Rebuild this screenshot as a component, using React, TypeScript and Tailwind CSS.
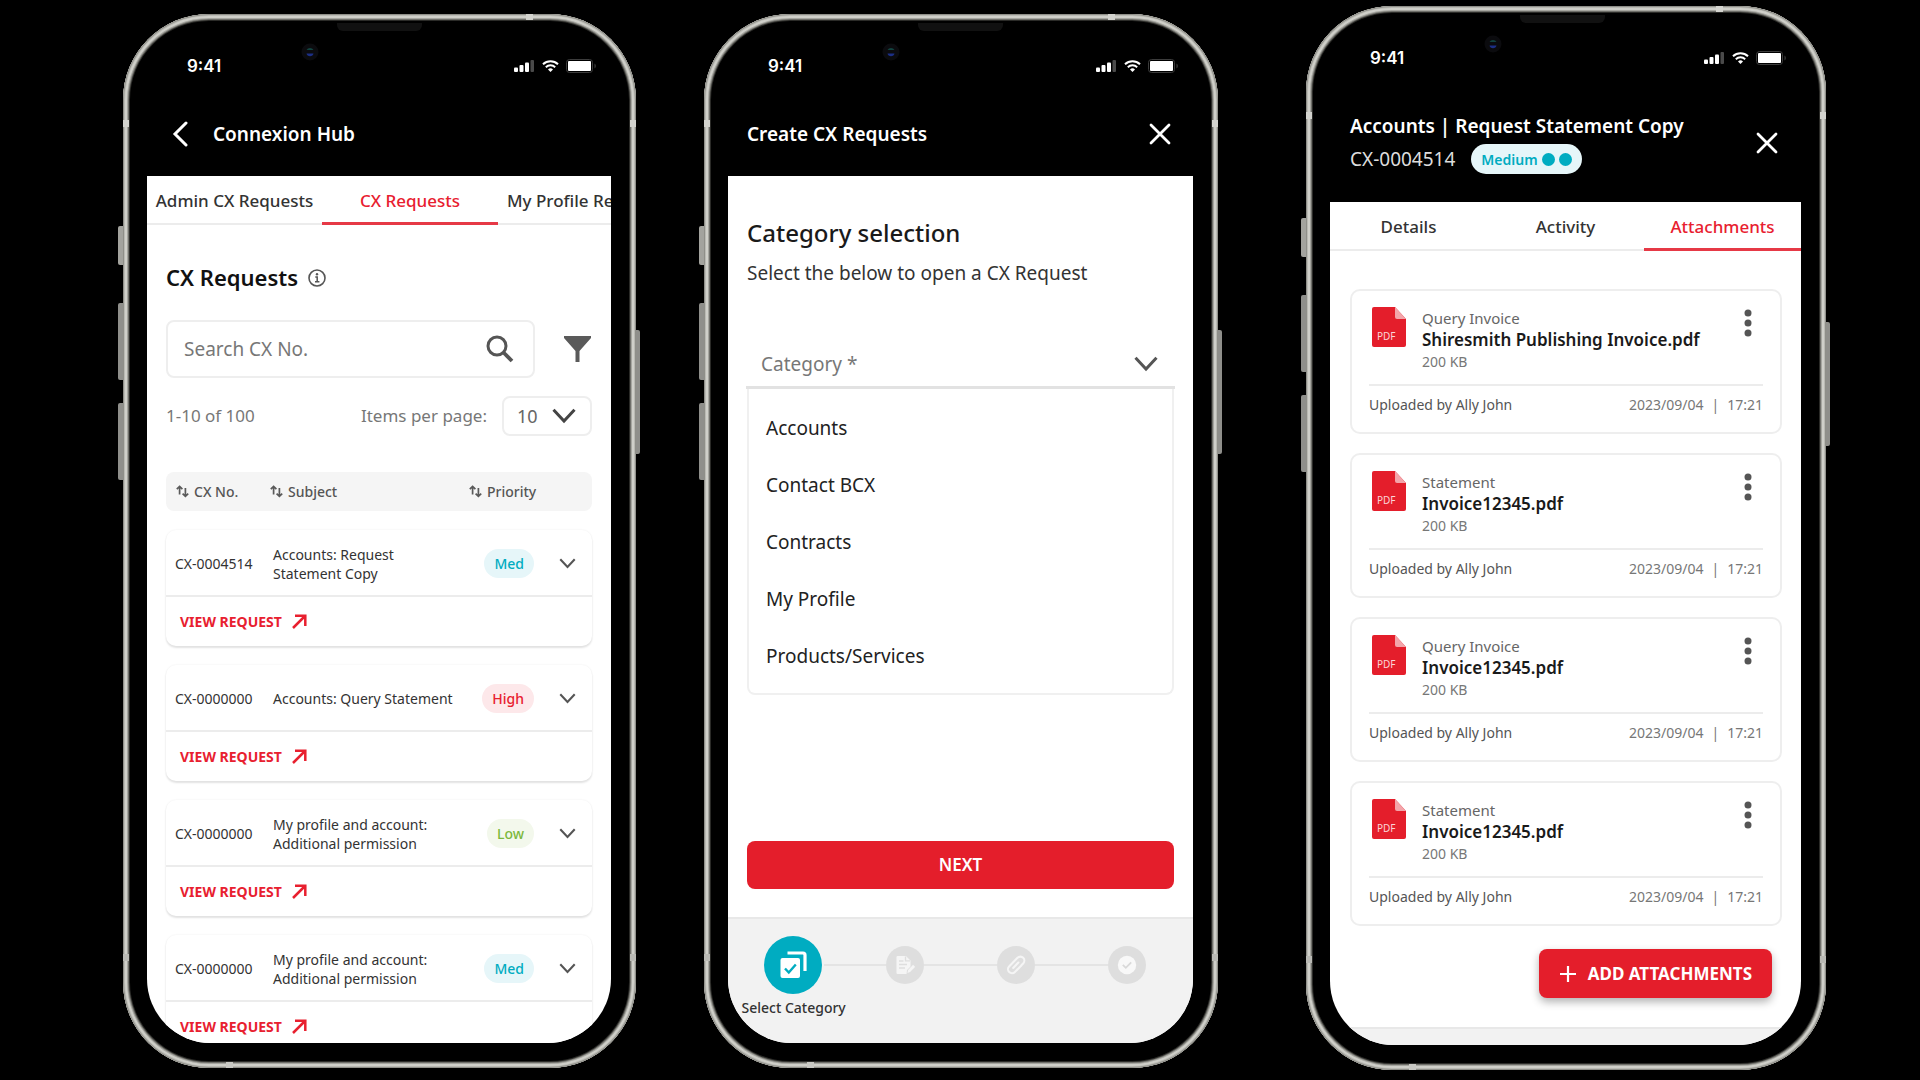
import type { ReactNode } from "react";

const requests = [
  { id: "CX-0004514", subject: "Accounts: Request Statement Copy", priority: "Med" },
  { id: "CX-0000000", subject: "Accounts: Query Statement", priority: "High" },
  { id: "CX-0000000", subject: "My profile and account: Additional permission", priority: "Low" },
  { id: "CX-0000000", subject: "My profile and account: Additional permission", priority: "Med" },
];

const badgeStyles: Record<string, string> = {
  Med: "bg-[#e6f6f9] text-[#00acc1]",
  High: "bg-[#fde8ea] text-[#e8202f]",
  Low: "bg-[#f3f8ec] text-[#7cb83c]",
};

const categories = ["Accounts", "Contact BCX", "Contracts", "My Profile", "Products/Services"];

const attachments = [
  { kind: "Query Invoice", name: "Shiresmith Publishing Invoice.pdf" },
  { kind: "Statement", name: "Invoice12345.pdf" },
  { kind: "Query Invoice", name: "Invoice12345.pdf" },
  { kind: "Statement", name: "Invoice12345.pdf" },
];

function Chevron({ className }: { className: string }) {
  return (
    <svg viewBox="0 0 24 16" className={className} fill="none" stroke="currentColor" strokeWidth="3" aria-hidden="true">
      <path d="M1.5 1.8 12 13 22.5 1.8" />
    </svg>
  );
}

function CloseIcon() {
  return (
    <svg viewBox="0 0 22 22" className="size-[22px]" fill="none" stroke="currentColor" strokeWidth="2.8" strokeLinecap="round" aria-hidden="true">
      <path d="M2 2 20 20M20 2 2 20" />
    </svg>
  );
}

function SortIcon() {
  return (
    <svg viewBox="0 0 13 13" className="size-[13px] shrink-0" fill="none" stroke="#5a5a5a" strokeWidth="1.7" aria-hidden="true">
      <path d="M3.6 9.5V1.5M.8 4.2l2.8-2.8 2.8 2.8M9.4 3v8.2M6.6 8.6l2.8 2.8 2.8-2.8" />
    </svg>
  );
}

function StatusBar() {
  return (
    <div className="flex h-5 items-center pr-3.5 pl-10 text-white">
      <span className="font-[Inter,sans-serif] text-[17px] leading-5 font-semibold">9:41</span>
      <div className="ml-auto flex items-center gap-[7px]">
        <svg viewBox="0 0 21 12" className="h-3 w-[21px]" fill="#fff" aria-hidden="true">
          <rect x="0" y="7.5" width="4" height="4.5" rx="1" />
          <rect x="5.5" y="5" width="4" height="7" rx="1" />
          <rect x="11" y="2.5" width="4" height="9.5" rx="1" />
          <rect x="16.5" y="0" width="3.5" height="12" rx="1" fill="#4a4a4a" />
        </svg>
        <svg viewBox="0 0 17 12" className="h-3 w-[17px]" fill="none" stroke="#fff" aria-hidden="true">
          <path d="M1 4.3a10.8 10.8 0 0 1 15 0" strokeWidth="2" />
          <path d="M3.8 7.2a6.8 6.8 0 0 1 9.4 0" strokeWidth="1.9" />
          <path d="M8.5 12 6 9.4a3.6 3.6 0 0 1 5 0z" fill="#fff" stroke="none" />
        </svg>
        <svg viewBox="0 0 31 14" className="h-3.5 w-[31px]" aria-hidden="true">
          <rect x="0.5" y="0.5" width="26" height="13" rx="3" fill="none" stroke="#3c3c3c" />
          <rect x="2" y="2" width="23" height="10" rx="1" fill="#fff" />
          <path d="M28.5 4.5a3 3 0 0 1 0 5z" fill="#3c3c3c" />
        </svg>
      </div>
    </div>
  );
}

function Phone({ className, header, children }: { className: string; header: ReactNode; children: ReactNode }) {
  return (
    <section className={`relative flex min-h-0 min-w-0 flex-col rounded-[86px] bg-black pt-[42px] pr-[25px] pb-[25px] pl-6 shadow-[inset_0_0_0_1px_#8f8f89,inset_0_0_0_2px_#b9b9b3,inset_0_0_0_4px_#cfcfc9,inset_0_0_0_5px_#a5a59f,inset_0_0_0_6px_#6f6f6a,inset_0_0_0_7px_#2b2b28] ${className}`}>
      {/* hardware buttons */}
      <i className="absolute top-[212px] -left-[5px] h-[39px] w-[5px] rounded-l-xs bg-[#a3a39e]" />
      <i className="absolute top-[289px] -left-[5px] h-[77px] w-[5px] rounded-l-xs bg-[#8f8f8b]" />
      <i className="absolute top-[389px] -left-[5px] h-[77px] w-[5px] rounded-l-xs bg-[#8f8f8b]" />
      <i className="absolute top-[316px] -right-[4px] h-[124px] w-1 rounded-r-xs bg-[#8f8f8b]" />
      {/* antenna bands */}
      <i className="absolute top-[106px] left-0 h-[7px] w-1.5 bg-[#d3d3ce]" />
      <i className="absolute top-[106px] right-0 h-[7px] w-1.5 bg-[#d3d3ce]" />
      <i className="absolute bottom-[107px] left-0 h-[7px] w-1.5 bg-[#b9b9b4]" />
      <i className="absolute right-0 bottom-[107px] h-[7px] w-1.5 bg-[#b9b9b4]" />
      <i className="absolute top-0 right-[103px] h-1.5 w-[7px] bg-[#d3d3ce]" />
      <i className="absolute bottom-0 left-[103px] h-1.5 w-[7px] bg-[#c9c9c4]" />
      {/* speaker and camera */}
      <i className="absolute top-[9px] left-[214px] h-2 w-[85px] rounded-b-md bg-[#111]" />
      <svg viewBox="0 0 18 18" className="absolute top-[29px] left-[178px] size-[18px]" aria-hidden="true">
        <circle cx="9" cy="9" r="8.5" fill="#0b0b0e" />
        <path d="M5.5 7a4 4 0 0 1 7 0z" fill="#12433f" />
        <path d="M5.5 10.5h7a3.6 3.6 0 0 1-7 0z" fill="#1c2f86" />
      </svg>

      <StatusBar />
      {header}
      <div className="relative flex min-h-0 flex-1 flex-col overflow-hidden rounded-b-[64px] bg-white">{children}</div>
    </section>
  );
}

function RequestsScreen() {
  return (
    <Phone
      className="mt-3.5 mb-3"
      header={
        <header className="flex h-[100px] items-center gap-[25px] pt-4 pl-[25px] text-white">
          <button type="button" aria-label="Back">
            <svg viewBox="0 0 16 26" className="h-[26px] w-4" fill="none" stroke="currentColor" strokeWidth="3" strokeLinecap="round" aria-hidden="true">
              <path d="M14 2 3 13l11 11" />
            </svg>
          </button>
          <h1 className="text-[19px] leading-7 font-semibold">Connexion Hub</h1>
        </header>
      }
    >
      <nav className="flex h-[49px] shrink-0 border-b-2 border-[#ececec] text-[17px] leading-6 font-medium whitespace-nowrap">
        <button type="button" className="-mb-0.5 w-[175px] shrink-0 text-[#333]">Admin CX Requests</button>
        <button type="button" className="-mb-0.5 w-44 shrink-0 border-b-[3px] border-[#e63946] pt-[3px] text-[#e8202f]">CX Requests</button>
        <button type="button" className="-mb-0.5 shrink-0 px-[9px] text-[#333]">My Profile Requests</button>
      </nav>
      <div className="flex flex-col px-[19px] pt-[38px]">
        <h2 className="flex items-center gap-2.5 text-[22px] leading-7 font-semibold text-[#111]">
          CX Requests
          <svg viewBox="0 0 18 18" className="mt-px size-[18px]" fill="none" stroke="#555" strokeWidth="1.6" aria-hidden="true">
            <circle cx="9" cy="9" r="8" />
            <path d="M7.3 8h1.9v4.6M7 12.7h4.4" strokeWidth="1.5" />
            <circle cx="9" cy="5.3" r="1.2" fill="#555" stroke="none" />
          </svg>
        </h2>
        <div className="mt-[29px] flex items-center gap-[29px]">
          <label className="flex h-[58px] flex-1 items-center rounded-lg border-2 border-[#eee] pr-[19px] pl-4">
            <input type="search" aria-label="Search CX No." placeholder="Search CX No." className="min-w-0 flex-1 text-[19px] leading-6 text-[#333] outline-none placeholder:text-[#777]" />
            <svg viewBox="0 0 28 28" className="size-7" fill="none" stroke="#555" aria-hidden="true">
              <circle cx="11" cy="11" r="9" strokeWidth="3" />
              <path d="m17.5 17.5 8.5 8.5" strokeWidth="3.8" />
            </svg>
          </label>
          <button type="button" aria-label="Filter" className="pr-px">
            <svg viewBox="0 0 27 26" className="h-[26px] w-[27px]" fill="#5a5a5a" aria-hidden="true">
              <path d="M0 0h27v2L15.5 15v11h-4V15L0 2z" />
            </svg>
          </button>
        </div>
        <div className="mt-[18px] flex items-center text-[17px] leading-6 text-[#777]">
          <span>1-10 of 100</span>
          <label htmlFor="page-size" className="mr-[15px] ml-auto">Items per page:</label>
          <span className="relative flex">
            <select id="page-size" className="h-10 w-[90px] appearance-none rounded-lg border-2 border-[#eee] pl-[13px] text-[18px] text-[#666]">
              <option>10</option>
            </select>
            <Chevron className="pointer-events-none absolute top-3 right-4 h-4 w-6 text-[#444]" />
          </span>
        </div>
        <table className="mt-[36px] block text-left text-[14px] leading-[19px]">
          <thead className="block">
            <tr className="grid h-[39px] grid-cols-[94px_1fr_123px] items-center rounded-lg bg-[#f5f5f5] pl-2.5 text-[#555]">
              {["CX No.", "Subject", "Priority"].map((label) => (
                <th key={label} scope="col" className="font-normal">
                  <button type="button" className="flex items-center gap-[5px] font-medium">
                    <SortIcon />
                    {label}
                  </button>
                </th>
              ))}
            </tr>
          </thead>
          {requests.map((request, index) => (
            <tbody key={index} className="mt-[19px] block rounded-[10px] bg-white shadow-[0_2px_2px_#e2e2e2,0_0_2px_#ececec]">
              <tr className="grid h-[67px] grid-cols-[98px_1fr_62px_58px] items-center border-b-2 border-[#ececec] pt-0.5 pl-[9px] text-[#333]">
                <td>{request.id}</td>
                <td className="pr-3">{request.subject}</td>
                <td className="flex justify-end">
                  <span className={`rounded-full px-2.5 py-[5px] font-medium ${badgeStyles[request.priority]}`}>{request.priority}</span>
                </td>
                <td className="flex justify-center pl-2">
                  <button type="button" aria-label={`Expand ${request.id}`}>
                    <Chevron className="h-[11px] w-[17px] text-[#555]" />
                  </button>
                </td>
              </tr>
              <tr className="flex h-[49px] items-center pl-3.5">
                <td>
                  <a href="#request" className="flex items-center gap-2.5 font-bold text-[#e8202f]">
                    VIEW REQUEST
                    <svg viewBox="0 0 15 15" className="size-[15px]" fill="none" stroke="currentColor" strokeWidth="2.5" aria-hidden="true">
                      <path d="M1 14 13 2M3 1.7h10.3V12" />
                    </svg>
                  </a>
                </td>
              </tr>
            </tbody>
          ))}
        </table>
      </div>
    </Phone>
  );
}

const stepIcons = [
  <svg key="category" viewBox="0 0 28 28" className="size-7" aria-hidden="true">
    <path d="M8.5 2H24a2 2 0 0 1 2 2v16" fill="none" stroke="#fff" strokeWidth="3.2" />
    <rect x="1.5" y="7" width="19.5" height="20" rx="2" fill="#fff" />
    <path d="m6 17.5 3.8 4 7-8" fill="none" stroke="#00acc1" strokeWidth="2.4" />
  </svg>,
  <svg key="details" viewBox="0 0 20 20" className="size-5" aria-hidden="true">
    <path d="M2.5 1H11l4.5 4.5v6L12 15l-.5 4h-9a1 1 0 0 1-1-1V2a1 1 0 0 1 1-1z" fill="#f5f5f5" />
    <path d="M4 6h4.5M4 9.5h8M4 13h6M10.5 1.5v4.3h4.5" fill="none" stroke="#dedede" strokeWidth="1.3" />
    <path d="m12.5 18 .6-3 5-5.2 2 2-5 5.2z" fill="#f5f5f5" />
  </svg>,
  <svg key="attach" viewBox="0 0 20 20" className="size-5" fill="none" stroke="#f5f5f5" strokeWidth="2.1" strokeLinecap="round" aria-hidden="true">
    <path d="M15.6 10.2 8.9 17a4 4 0 0 1-5.8-5.6l8.4-8.6a4 4 0 0 1 5.7 0 4 4 0 0 1 0 5.6L15.6 10" />
    <path d="m12.4 7.6-5.2 5.3" />
  </svg>,
  <svg key="done" viewBox="0 0 20 20" className="size-5" aria-hidden="true">
    <circle cx="10" cy="10" r="9.2" fill="#f8f8f8" />
    <path d="m5.8 9.8 3 3 5.4-5.5" fill="none" stroke="#d9d9d9" strokeWidth="1.8" />
  </svg>,
];

function CreateScreen() {
  return (
    <Phone
      className="mt-3.5 mb-3"
      header={
        <header className="flex h-[100px] items-center justify-between pt-4 pr-[22px] pl-[19px] text-white">
          <h1 className="text-[19px] leading-7 font-semibold">Create CX Requests</h1>
          <button type="button" aria-label="Close">
            <CloseIcon />
          </button>
        </header>
      }
    >
      <div className="flex flex-1 flex-col px-[19px] pt-[41px]">
        <h2 className="text-[24px] leading-8 font-medium text-[#1a1a1a]">Category selection</h2>
        <p className="mt-2.5 text-[19px] leading-7 text-[#333]">Select the below to open a CX Request</p>
        <button type="button" aria-haspopup="listbox" aria-expanded="true" className="mt-[51px] -mr-px -ml-px flex items-center justify-between border-b-[3px] border-[#e2e2e2] pt-3 pr-[17px] pb-2 pl-[15px] text-[19px] leading-7 text-[#777]">
          Category *
          <Chevron className="h-4 w-6 text-[#555]" />
        </button>
        <ul role="listbox" aria-label="Category" className="rounded-b-lg border-2 border-t-0 border-[#f0f0f0] pt-[11px] pb-2 pl-[17px] text-[19px] leading-[57px] text-[#222]">
          {categories.map((category) => (
            <li key={category} role="option" aria-selected="false">{category}</li>
          ))}
        </ul>
        <button type="button" className="mt-auto mb-7 h-12 rounded-lg bg-[#e41e2b] text-[17px] leading-6 font-semibold text-white">NEXT</button>
      </div>
      <ol className="grid h-[126px] grid-cols-4 border-t-2 border-[#e8e8e8] bg-[#f2f2f2] px-2.5 pt-[17px]">
        {stepIcons.map((icon, index) => (
          <li key={index} className="flex min-w-0 flex-col items-center">
            <div className="flex h-[58px] w-full items-center">
              <i className={`h-0.5 flex-1 ${index > 0 ? "bg-[#e4e4e4]" : ""}`} />
              <span className={`flex items-center justify-center rounded-full ${index === 0 ? "mr-0.5 size-[58px] bg-[#00acc1]" : "size-[38px] bg-[#dedede]"}`}>{icon}</span>
              <i className={`h-0.5 flex-1 ${index < 3 ? "bg-[#e4e4e4]" : ""}`} />
            </div>
            {index === 0 && <span className="mt-[3px] text-[14px] leading-[22px] font-medium whitespace-nowrap text-[#333]">Select Category</span>}
          </li>
        ))}
      </ol>
    </Phone>
  );
}

function PdfIcon() {
  return (
    <svg viewBox="0 0 34 40" className="h-10 w-[34px] shrink-0" aria-label="PDF">
      <path d="M2 0h21l11 12v26a2 2 0 0 1-2 2H2a2 2 0 0 1-2-2V2a2 2 0 0 1 2-2z" fill="#e41e2b" />
      <path d="M23 0l11 12H25a2 2 0 0 1-2-2z" fill="#f3a5aa" />
      <text x="5" y="33" fill="#fbd5d8" className="font-['Noto_Sans',sans-serif] text-[10px]">PDF</text>
    </svg>
  );
}

function AttachmentsScreen() {
  return (
    <Phone
      className="mt-1.5 mb-2.5 ml-5"
      header={
        <header className="flex h-[134px] items-center justify-between pt-[15px] pr-[23px] pl-5 text-white">
          <div>
            <h1 className="text-[19px] leading-[33px] font-semibold">Accounts | Request Statement Copy</h1>
            <p className="flex items-center gap-4 text-[19px] leading-[33px] text-[#ddd]">
              CX-0004514
              <span className="flex h-[30px] items-center gap-1 rounded-full bg-[#e6f6f9] px-2.5 text-[14px] font-semibold text-[#00acc1]">
                Medium
                <i className="size-[13px] rounded-full bg-[#00acc1]" />
                <i className="size-[13px] rounded-full bg-[#00acc1]" />
              </span>
            </p>
          </div>
          <button type="button" aria-label="Close">
            <CloseIcon />
          </button>
        </header>
      }
    >
      <nav className="grid h-[49px] grid-cols-3 border-b-2 border-[#ececec] text-[17px] leading-6 font-medium text-[#333]">
        <button type="button" className="pt-0.5">Details</button>
        <button type="button" className="pt-0.5">Activity</button>
        <button type="button" className="-mb-0.5 border-b-[3px] border-[#e63946] pt-[3px] text-[#e8202f]">Attachments</button>
      </nav>
      <div className="flex flex-col gap-[19px] pt-[38px] pr-[19px] pl-5">
        {attachments.map((file, index) => (
          <article key={index} className="rounded-[10px] border-2 border-[#eee] px-[17px] pb-4 text-[14px] leading-[22px]">
            <div className="flex h-[95px] items-start border-b-2 border-[#ececec] pt-4 pl-[3px]">
              <PdfIcon />
              <div className="ml-4 flex-1 text-[#777]">
                <p className="text-[15px] text-[#666]">{file.kind}</p>
                <h3 className="text-[17px] font-semibold text-[#1a1a1a]">{file.name}</h3>
                <p>200 KB</p>
              </div>
              <button type="button" aria-label={`Options for ${file.name}`} className="pr-[11px]">
                <svg viewBox="0 0 8 28" className="mt-0.5 h-7 w-2" fill="#555" aria-hidden="true">
                  <circle cx="4" cy="4" r="3.5" />
                  <circle cx="4" cy="14" r="3.5" />
                  <circle cx="4" cy="24" r="3.5" />
                </svg>
              </button>
            </div>
            <div className="flex justify-between pt-2">
              <span className="text-[#555]">Uploaded by Ally John</span>
              <time className="flex gap-2 text-[#777]">
                <span>2023/09/04</span>
                <span>|</span>
                <span>17:21</span>
              </time>
            </div>
          </article>
        ))}
      </div>
      <button type="button" className="mt-[23px] mr-[29px] flex h-[49px] items-center gap-[11px] self-end rounded-lg bg-[#e41e2b] px-5 text-[17px] leading-6 font-bold text-white shadow-[0_4px_8px_rgba(0,0,0,0.3)]">
        <svg viewBox="0 0 18 18" className="size-[18px]" fill="none" stroke="currentColor" strokeWidth="2.2" aria-hidden="true">
          <path d="M9 1v16M1 9h16" />
        </svg>
        ADD ATTACHMENTS
      </button>
      <div className="mt-auto h-[18px] shrink-0 border-t-2 border-[#e8e8e8] bg-[#f2f2f2]" />
    </Phone>
  );
}

export default function App() {
  return (
    <main className="grid h-screen grid-cols-[513fr_514fr_540fr] grid-rows-[minmax(0,1fr)] gap-x-[68px] bg-black pr-[94px] pl-[123px] font-['Noto_Sans',sans-serif]">
      <RequestsScreen />
      <CreateScreen />
      <AttachmentsScreen />
    </main>
  );
}
